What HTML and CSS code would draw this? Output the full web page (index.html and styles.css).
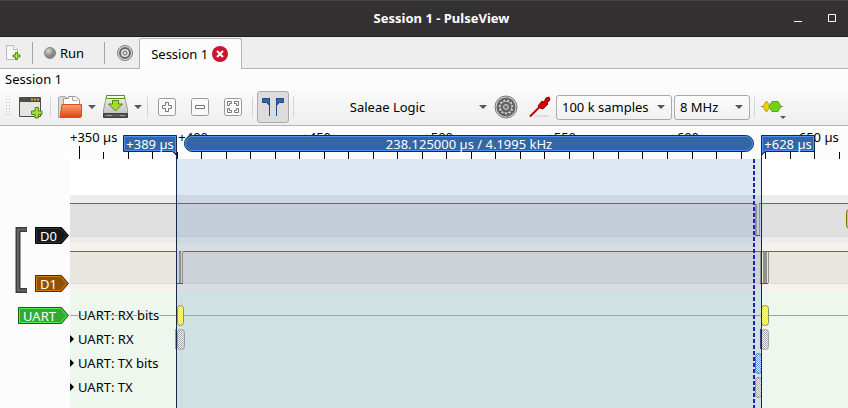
FILE: index.html
```html
<!DOCTYPE html>
<html lang="en">
<head>
<meta charset="utf-8">
<title>Session 1 - PulseView</title>
<link rel="stylesheet" href="styles.css">
</head>
<body>
<header class="titlebar">
  <span></span>
  <h1 class="title">Session 1 - PulseView</h1>
  <div class="window-controls">
    <button class="plain" aria-label="Minimize"><svg width="10" height="10"><path d="M1 8.5h8" stroke="#fff"/></svg></button>
    <button class="plain" aria-label="Maximize"><svg width="10" height="10"><path d="M1.5 1.5h7v7h-7z" fill="none" stroke="#fff"/></svg></button>
  </div>
</header>

<nav class="session-bar">
  <button class="plain new-session" aria-label="New session">
    <svg width="18" height="18"><path d="M1.500 1.500h7l4 4v10h-11z" fill="#f6f6f6" stroke="#bbb"/><path d="M8.500 1.500v4h4" fill="#fff" stroke="#bbb"/><path d="M10.500 8.500h2v2.500h2.500v2h-2.500v2.500h-2v-2.500h-2.500v-2h2.500z" fill="#b4e04a" stroke="#4e8a06"/></svg>
  </button>
  <span class="bar-line"></span>
  <button class="plain run">
    <svg width="14" height="14"><defs><radialGradient id="ball" cx=".35" cy=".3"><stop offset="0" stop-color="#d8d8d4"/><stop offset="1" stop-color="#858780"/></radialGradient></defs><circle cx="7" cy="7" r="5.500" fill="url(#ball)" stroke="#888a85"/></svg>
    Run
  </button>
  <span class="bar-line"></span>
  <button class="plain settings" aria-label="Settings">
    <svg width="18" height="18" fill="none"><circle cx="9" cy="9" r="7.500" fill="#e0e0e0" stroke="#777"/><circle cx="9" cy="9" r="5" stroke="#666" stroke-width="2"/><circle cx="9" cy="9" r="2" stroke="#666"/></svg>
  </button>
  <div class="tab">
    <a class="tab-link" href="#session">Session 1</a>
    <button class="plain" aria-label="Close session"><svg width="16" height="16"><circle cx="8" cy="8" r="8" fill="#c9152d"/><path d="M5 5l6 6M11 5l-6 6" stroke="#fff" stroke-width="2"/></svg></button>
  </div>
</nav>

<main class="session" id="session">
  <h2 class="session-name">Session 1</h2>
  <div class="toolbar">
    <svg class="grip" width="6" height="18"><path d="M1.500 1v17M4.500 1v17" stroke="#bbb" stroke-dasharray="1 2"/></svg>
    <button class="plain new-view" aria-label="New view">
      <svg width="24" height="24"><path d="M.5 2.500h21v19h-21z" fill="#e4e4e2" stroke="#4c4d4b"/><path d="M1 3h20v4H1z" fill="#4c4d4b"/><path d="M12 4.500h8" stroke="#e9a33a" stroke-width="2" stroke-dasharray="2 1"/><path d="M16 12.500h3.500v3.500h3.500v3.500h-3.500v3.500h-3.500v-3.500h-3.500v-3.500h3.500z" fill="#a7d84b" stroke="#4e8a06"/></svg>
    </button>
    <span class="sep"></span>
    <button class="plain open" aria-label="Open">
      <svg width="24" height="24"><defs><linearGradient id="folder" x2="0" y2="1"><stop offset="0" stop-color="#f9a271"/><stop offset="1" stop-color="#e2430d"/></linearGradient></defs><path d="M.5 22.500v-20l2-1h5l2 2h11v19z" fill="#d9d9d6" stroke="#aaa"/><path d="M5.500 10.500v-7h5v-2h7l4 3.500v7z" fill="#fff" stroke="#999"/><path d="M14.500 1.500v4h5" fill="#eee" stroke="#aaa"/><path d="M4 9.500h19.500v12l-1 1h-20.500z" fill="url(#folder)" stroke="#d84c18"/></svg>
      <i class="caret"></i>
    </button>
    <button class="plain save" aria-label="Save">
      <svg width="25" height="24"><defs><linearGradient id="disk" x2="0" y2="1"><stop offset="0" stop-color="#eee"/><stop offset="1" stop-color="#bbb"/></linearGradient></defs><path d="M3.500 1.500h18l3 13v8h-24v-8z" fill="url(#disk)" stroke="#999"/><path d="M.5 18.500h24v4h-24z" fill="#555753" stroke="#3d3f3b"/><path d="M3 20.500h6M17 20.500h5" stroke="#999"/><path d="M3.500.5h18v3h-18z" fill="#fff" stroke="#4e9a06"/><path d="M9.500 5.500h6v3.500h4l-7 7-7-7h4z" fill="#a5d83f" stroke="#4e8a06"/></svg>
      <i class="caret"></i>
    </button>
    <span class="sep"></span>
    <button class="plain zoom" aria-label="Zoom in"><svg width="18" height="18"><rect x=".5" y=".5" width="17" height="17" rx="2" fill="#fafafa" stroke="#999"/><path d="M7.500 4.500h3v3h3v3h-3v3h-3v-3h-3v-3h3z" fill="#fff" stroke="#777"/></svg></button>
    <button class="plain zoom" aria-label="Zoom out"><svg width="18" height="18"><rect x=".5" y=".5" width="17" height="17" rx="2" fill="#fafafa" stroke="#999"/><path d="M4.500 7.500h9v3h-9z" fill="#fff" stroke="#777"/></svg></button>
    <button class="plain zoom" aria-label="Zoom to fit"><svg width="18" height="18"><rect x=".5" y=".5" width="17" height="17" rx="2" fill="#fafafa" stroke="#999"/><path d="M3.500 3.500h4v2h-2v2h-2zM10.500 3.500h4v4h-2v-2h-2zM3.500 10.500h2v2h2v2h-4zM12.500 10.500h2v4h-4v-2h2z" fill="#fff" stroke="#777"/></svg></button>
    <span class="sep"></span>
    <button class="cursors" aria-label="Show cursors" aria-pressed="true"><svg width="24" height="20"><path d="M1.500 1.500h7v7l-3-3h-4zM22.500 1.500h-7v7l3-3h4z" fill="#3465a4" stroke="#204a87"/><path d="M8.500 1v18M15.500 1v18" stroke="#204a87"/></svg></button>
    <span class="sep"></span>
    <button class="plain device"><span>Saleae Logic</span><i class="caret"></i></button>
    <button class="plain configure" aria-label="Configure device">
      <svg width="24" height="24" fill="none"><circle cx="12" cy="12" r="11" fill="#d4d4d2" stroke="#777"/><circle cx="12" cy="12" r="9.500" fill="#60625e"/><circle cx="12" cy="12" r="6.500" stroke="#d4d4d2" stroke-width="2"/><circle cx="12" cy="12" r="7" stroke="#60625e" stroke-width="2" stroke-dasharray="2 2"/><circle cx="12" cy="12" r="4.500" fill="#60625e"/><circle cx="12" cy="12" r="2.500" fill="#777" stroke="#d4d4d2"/></svg>
    </button>
    <button class="plain probes" aria-label="Configure channels">
      <svg width="22" height="24"><ellipse cx="13" cy="21" rx="8" ry="1" fill="#ddd"/><path d="M1 21.500l10-10" stroke="#c00000" stroke-width="2"/><path d="M9 11l4-5 2 1 2-4 3-1 1 3-3 3 1 1-5 5-3-1z" fill="#cc0000" stroke="#a40000"/></svg>
    </button>
    <label class="combo samples"><select aria-label="Sample count"><option>100 k samples</option></select><i class="caret"></i></label>
    <label class="combo rate"><select aria-label="Sample rate"><option>8 MHz</option></select><i class="caret"></i></label>
    <span class="sep"></span>
    <button class="plain decoder" aria-label="Add protocol decoder">
      <svg width="26" height="24"><path d="M0 11.500h22" stroke="#777"/><path d="M5 6.500h1l3 5-3 5h-1l-3-5z" fill="#edd400" stroke="#b89a00"/><path d="M11 6.500h6l3 5-3 5h-6l-3-5z" fill="#73d216" stroke="#57a60b"/><path d="M19 21h6l-3 3z" fill="#555"/></svg>
    </button>
  </div>

  <div class="traces">
    <svg class="gutter" aria-label="Channels">
      <path d="M27 103.500h-9v61h9" fill="none" stroke="#3d3f3c" stroke-width="5"/>
      <path d="M26.500 103.500h-8.500v61h8.500" fill="none" stroke="#646662" stroke-width="2"/>
      <g class="channel">
        <path d="M35.500 101.500h26l7 8-7 8h-26z" fill="#16191a" stroke="#000"/><path d="M36.500 102.500h24l6 7-6 7h-24z" fill="none" stroke="#2e3436"/>
        <text x="40" y="115">D0</text>
        <path d="M35.500 149.500h26l7 8-7 8h-26z" fill="#8f5202" stroke="#4a2b02"/><path d="M36.500 150.500h24l6 7-6 7h-24z" fill="none" stroke="#d87c04"/>
        <text x="40" y="163">D1</text>
        <path d="M18.500 181.500h43l7 8-7 8h-43z" fill="#33a833" stroke="#145c14"/><path d="M19.500 182.500h41l6 7-6 7h-41z" fill="none" stroke="#4df04d"/>
        <text x="23" y="195">UART</text>
      </g>
    </svg>
    <svg class="plot" id="plot" aria-label="Trace view">
      <defs>
        <pattern id="yellow" width="2" height="2" patternUnits="userSpaceOnUse"><path fill="#fbfbd0" d="M0 0h2v2H0z"/><path fill="#e6e050" d="M0 0h1v1H0zM1 1h1v1H1z"/></pattern>
        <pattern id="grey" width="2" height="2" patternUnits="userSpaceOnUse"><path fill="#f2f2f2" d="M0 0h2v2H0z"/><path fill="#a8a8ae" d="M0 0h1v1H0zM1 1h1v1H1z"/></pattern>
        <pattern id="blue" width="2" height="2" patternUnits="userSpaceOnUse"><path fill="#e0f0fc" d="M0 0h2v2H0z"/><path fill="#5c96e0" d="M0 0h1v1H0zM1 1h1v1H1z"/></pattern>
      </defs>
      <!-- Row backgrounds -->
      <g shape-rendering="crispEdges">
        <rect y="33" width="100%" height="36" fill="#fff"/>
        <rect y="69" width="100%" height="48" fill="#ececec"/>
        <rect y="77" width="100%" height="33" fill="#e0e0e0"/>
        <rect y="110" width="100%" height="1" fill="#d8d8d8"/>
        <rect y="117" width="100%" height="48" fill="#f6f1eb"/>
        <rect y="125" width="100%" height="32" fill="#e9e5df"/>
        <rect y="157" width="100%" height="1" fill="#dfdbd6"/>
        <rect y="165" width="100%" height="100%" fill="#edf7ed"/>
        <rect x="107" y="33" width="584" height="100%" fill="#3a78b4" fill-opacity=".17"/>
        <rect y="189" width="100%" height="1" fill="#98a69b"/>
      </g>
      <!-- Logic levels -->
      <g shape-rendering="crispEdges">
        <path fill="#00b100" d="M0 77h685v1H0zM689 77h2000v1H689zM0 125h107v1H0zM109 125h2v1h-2zM113 125h578v1H113zM691 125h2000v1H691z"/>
        <path fill="#909090" d="M685 78h2v32h-2zM689 78h1v32h-1zM106 126h1v31h-1zM109 126h2v31h-2zM112 126h1v31h-1zM690 126h1v31h-1zM693 126h4v31h-4zM698 126h1v31h-1z"/>
        <path fill="#b03030" d="M685 109h5v1h-5zM106 157h7v1h-7zM690 157h8v1h-8z"/>
      </g>
      <rect x="776.500" y="83.500" width="12" height="19" rx="3" fill="#e0cc20" stroke="#7c7000"/>
      <!-- Annotations -->
      <rect x="107.500" y="179.500" width="6" height="20" rx="3" fill="url(#yellow)" stroke="#91915a"/>
      <path d="M105.500 203v20" stroke="#9aa0b4"/>
      <rect x="107.500" y="203.500" width="7" height="20" rx="3" fill="url(#grey)" stroke="#9b9ba5"/>
      <rect x="691.500" y="179.500" width="7" height="20" rx="3" fill="url(#yellow)" stroke="#91915a"/>
      <path d="M690.500 203v20" stroke="#444080"/>
      <rect x="691.500" y="203.500" width="7" height="20" rx="3" fill="url(#grey)" stroke="#a5a5a8"/>
      <rect x="685.500" y="227.500" width="6" height="20" rx="3" fill="url(#blue)" stroke="#537aaf"/>
      <rect x="685.500" y="251.500" width="6" height="20" rx="3" fill="url(#grey)" stroke="#909298"/>
      <g class="row-names">
        <text x="8" y="194">UART: RX bits</text>
        <text x="8" y="218">UART: RX</text>
        <text x="8" y="242">UART: TX bits</text>
        <text x="8" y="266">UART: TX</text>
      </g>
      <path d="M0 209v8l4-4zM0 233v8l4-4zM0 257v8l4-4z"/>
      <!-- Time ruler -->
      <g id="ticks" stroke="#000" shape-rendering="crispEdges"></g>
      <g class="ruler">
        <text x="0" y="16">+350 µs</text>
        <g id="times" text-anchor="middle"></g>
      </g>
      <!-- Cursors and hover marker -->
      <path d="M106.500 29v600M691.500 29v600" stroke="#13294c" shape-rendering="crispEdges"/>
      <path d="M684 33v600" stroke="#2020b4" stroke-width="2" stroke-dasharray="4 2"/>
      <g fill="#3465a4">
        <path d="M53.500 9.500h53v20l-4-4h-49zM691.500 9.500h53v16h-49l-4 4z" stroke="#12294d"/>
        <path d="M54.500 10.500h51v16l-2-2h-49zM692.500 10.500h51v14h-49l-2 2z" stroke="#4b94f5"/>
        <rect x="114.500" y="9.500" width="569" height="16" rx="8" stroke="#12294d"/>
        <rect x="115.500" y="10.500" width="567" height="14" rx="7" stroke="#4b94f5"/>
      </g>
      <g class="cursor-text" text-anchor="middle">
        <text x="80" y="23">+389 µs</text>
        <text x="399" y="23">238.125000 µs / 4.1995 kHz</text>
        <text x="718" y="23">+628 µs</text>
      </g>
    </svg>
  </div>
</main>
<script src="ruler.js"></script>
</body>
</html>
```
FILE: styles.css
```css
* { box-sizing: border-box; }
body {
  margin: 0;
  min-height: 100vh;
  display: flex;
  flex-direction: column;
  overflow: hidden;
  background: #fcfcfc;
  color: #000;
  font: 13px/18px "Noto Sans", "Open Sans", sans-serif;
}
button, select { font: inherit; color: inherit; }
svg { display: block; flex: none; }
.plain {
  display: flex;
  align-items: center;
  padding: 0;
  border: 0;
  background: none;
}

.titlebar {
  display: grid;
  grid-template-columns: 1fr auto 1fr;
  align-items: center;
  height: 37px;
  padding: 0 11px 2px 46px;
  background: #333131;
  border-top: 1px solid #474545;
  border-bottom: 1px solid #1f1e1e;
}
.title { margin: 0; color: #fff; font-size: 13px; font-weight: 700; }
.window-controls { display: flex; justify-content: flex-end; gap: 24px; }

.session-bar {
  display: flex;
  align-items: center;
  height: 32px;
  padding-left: 5px;
  background: #eee;
  border-bottom: 1px solid #b4b4b4;
}
.bar-line { width: 1px; height: 22px; background: #a6a6a6; }
.new-session { margin-right: 9px; }
.run { gap: 3px; margin: 0 20px 0 10px; }
.settings { margin: 0 5px 0 11px; }
.tab {
  display: flex;
  align-items: center;
  gap: 4px;
  align-self: stretch;
  height: 31px;
  margin: 1px 0 -1px;
  padding: 0 13px 0 11px;
  background: #fcfcfc;
  border: 1px solid #b4b4b4;
  border-bottom: 0;
  border-radius: 3px 3px 0 0;
}
.tab-link { color: inherit; text-decoration: none; }

.session { flex: 1; display: flex; flex-direction: column; }
.session-name { margin: 0; padding: 1px 5px; font-size: 13px; font-weight: 400; }
.toolbar {
  display: flex;
  align-items: center;
  height: 37px;
  padding-left: 5px;
  background: linear-gradient(#fbfbfb, #eee);
  border-bottom: 1px solid #b4b4b4;
}
.sep { width: 1px; height: 20px; background: #d4d4d4; }
.grip { margin-right: 8px; }
.new-view { margin-right: 7px; }
.open { gap: 6px; margin: 0 7px; }
.save { gap: 6px; margin-right: 5px; }
.caret {
  width: 8px;
  height: 4px;
  background: #555;
  clip-path: polygon(0 0, 100% 0, 50% 100%);
  pointer-events: none;
}
.zoom { margin-left: 10px; margin-right: 5px; }
.zoom + .sep { margin-left: 5px; }
.cursors {
  display: grid;
  place-items: center;
  width: 32px;
  height: 32px;
  margin: 0 4px;
  padding: 0;
  background: #dcdcdc;
  border: 1px solid #aaa;
  border-radius: 3px;
}
.device { flex: 0 1 193px; margin-right: 7px; }
.device span { flex: 1; padding-left: 2px; }
.configure { margin-right: 11px; }
.probes { margin-right: 5px; }
.combo { display: grid; align-items: center; height: 25px; margin-right: 2px; }
.combo select {
  grid-area: 1 / 1;
  width: 100%;
  height: 25px;
  padding: 0 5px;
  appearance: none;
  border: 1px solid #aaa;
  border-radius: 3px;
  background: linear-gradient(#fdfdfd, #f0f0f0);
}
.combo .caret { grid-area: 1 / 1; justify-self: end; margin-right: 7px; }
.samples { width: 116px; }
.rate { width: 76px; }
.rate + .sep { margin: 0 6px 0 2px; }

.traces { flex: 1; display: flex; overflow: hidden; }
.gutter { width: 70px; height: auto; }
.plot { flex: 1; height: auto; min-width: 0; }
.channel text, .cursor-text { fill: #fff; }
.row-names text { paint-order: stroke; stroke: #edf7ed; stroke-width: 2px; }
```
FILE: ruler.js
```js
// Ruler scale: five minor divisions to each 50 µs label.
const SVG = "http://www.w3.org/2000/svg";
const firstTick = 9;
const majorStep = 122.6;
const plot = document.getElementById("plot");
const ticks = document.getElementById("ticks");
const times = document.getElementById("times");

function drawRuler() {
  const width = plot.getBoundingClientRect().width;
  ticks.replaceChildren();
  times.replaceChildren();
  for (let i = 0; firstTick + i * majorStep / 5 < width; i++) {
    const x = Math.floor(firstTick + i * majorStep / 5) + 0.5;
    const tick = document.createElementNS(SVG, "path");
    tick.setAttribute("d", `M${x} ${i % 5 ? 26 : 20}V33`);
    ticks.append(tick);
    if (i && i % 5 === 0) {
      const label = document.createElementNS(SVG, "text");
      label.setAttribute("x", Math.ceil(x));
      label.setAttribute("y", 16);
      label.textContent = `+${350 + i * 10} µs`;
      times.append(label);
    }
  }
}

drawRuler();
window.addEventListener("resize", drawRuler);
```
